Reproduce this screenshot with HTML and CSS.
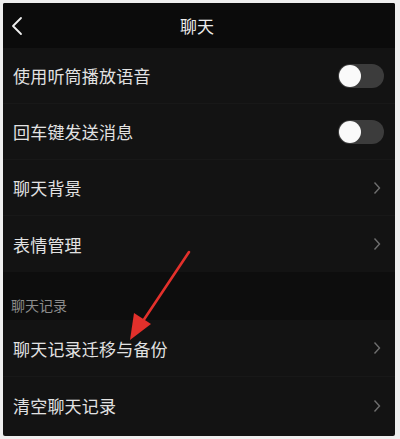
FILE: index.html
```html
<!DOCTYPE html>
<html lang="zh">
<head>
<meta charset="utf-8">
<link rel="stylesheet" href="styles.css">
</head>
<body>
<div class="panel">
  <div class="header">
    <svg class="back" width="12" height="20" viewBox="0 0 12 20"><path d="M10 2 L2 10 L10 18" fill="none" stroke="#f0f0f0" stroke-width="1.8" stroke-linecap="round" stroke-linejoin="round"/></svg>
    <div class="title">聊天</div>
  </div>
  <div class="row"><span class="label">使用听筒播放语音</span><span class="toggle"><span class="knob"></span></span></div>
  <div class="row"><span class="label">回车键发送消息</span><span class="toggle"><span class="knob"></span></span></div>
  <div class="row"><span class="label">聊天背景</span><svg class="chev" width="8" height="14" viewBox="0 0 8 14"><path d="M1.5 1.5 L6.5 7 L1.5 12.5" fill="none" stroke="#6e6e6e" stroke-width="1.4"/></svg></div>
  <div class="row last"><span class="label">表情管理</span><svg class="chev" width="8" height="14" viewBox="0 0 8 14"><path d="M1.5 1.5 L6.5 7 L1.5 12.5" fill="none" stroke="#6e6e6e" stroke-width="1.4"/></svg></div>
  <div class="section">聊天记录</div>
  <div class="row tall"><span class="label">聊天记录迁移与备份</span><svg class="chev" width="8" height="14" viewBox="0 0 8 14"><path d="M1.5 1.5 L6.5 7 L1.5 12.5" fill="none" stroke="#6e6e6e" stroke-width="1.4"/></svg></div>
  <div class="row tall last"><span class="label">清空聊天记录</span><svg class="chev" width="8" height="14" viewBox="0 0 8 14"><path d="M1.5 1.5 L6.5 7 L1.5 12.5" fill="none" stroke="#6e6e6e" stroke-width="1.4"/></svg></div>
  <svg class="arrow" width="400" height="439" viewBox="0 0 400 439">
    <path d="M189 252 L143 321" stroke="#e2302b" stroke-width="2.6" stroke-linecap="round" fill="none"/>
    <path d="M130 340 L134 313 L151 324 Z" fill="#e2302b"/>
  </svg>
</div>
</body>
</html>
```
FILE: styles.css
```css
html, body {
  margin: 0;
  padding: 0;
  background: #efefef;
}
body {
  width: 400px;
  height: 439px;
  overflow: hidden;
  font-family: "Noto Sans CJK SC", "Noto Sans", sans-serif;
}
.panel {
  position: relative;
  margin: 3px 0 0 3px;
  width: 392px;
  height: 433px;
  background: #131313;
  border-radius: 2px;
  overflow: hidden;
}
.header {
  height: 45px;
  background: #0b0b0b;
  display: flex;
  align-items: center;
  justify-content: center;
  position: relative;
}
.back {
  position: absolute;
  left: 8px;
  top: 13px;
}
.title {
  color: #ececec;
  font-size: 17px;
  margin-right: 4px;
}
.row {
  height: 56px;
  display: flex;
  align-items: center;
  justify-content: space-between;
  padding: 0 12px 0 10px;
  border-bottom: 1px solid #181818;
  box-sizing: border-box;
}
.row.last {
  border-bottom: none;
}
.row.tall {
  height: 57px;
}
.label {
  color: #e2e2e2;
  font-size: 17px;
  letter-spacing: 0.2px;
}
.toggle {
  width: 46px;
  height: 24px;
  border-radius: 12px;
  background: #3c3c3c;
  display: flex;
  align-items: center;
  padding-left: 1px;
  box-sizing: border-box;
  margin-right: -1px;
}
.knob {
  width: 22px;
  height: 22px;
  border-radius: 50%;
  background: #fafafa;
}
.chev {
  margin-right: 2px;
}
.section {
  height: 48px;
  background: #0d0d0d;
  color: #8c8c8c;
  font-size: 14px;
  box-sizing: border-box;
  padding: 24px 0 0 8px;
  line-height: 18px;
}
.arrow {
  position: absolute;
  left: -3px;
  top: -3px;
  pointer-events: none;
}
```
